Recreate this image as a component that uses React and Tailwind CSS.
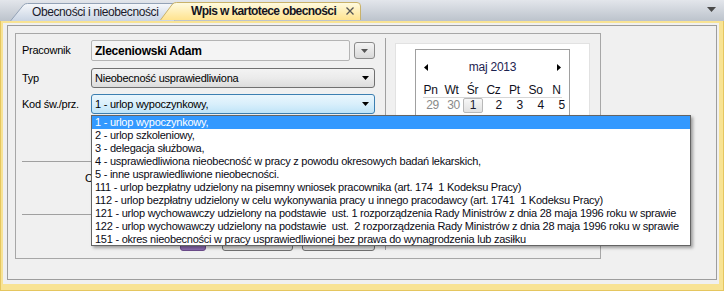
import React from "react";

const items = [
  "1 - urlop wypoczynkowy,",
  "2 - urlop szkoleniowy,",
  "3 - delegacja służbowa,",
  "4 - usprawiedliwiona nieobecność w pracy z powodu okresowych badań lekarskich,",
  "5 - inne usprawiedliwione nieobecności.",
  "111 - urlop bezpłatny udzielony na pisemny wniosek pracownika (art. 174  1 Kodeksu Pracy)",
  "112 - urlop bezpłatny udzielony w celu wykonywania pracy u innego pracodawcy (art. 1741  1 Kodeksu Pracy)",
  "121 - urlop wychowawczy udzielony na podstawie  ust. 1 rozporządzenia Rady Ministrów z dnia 28 maja 1996 roku w sprawie",
  "122 - urlop wychowawczy udzielony na podstawie  ust.  2 rozporządzenia Rady Ministrów z dnia 28 maja 1996 roku w sprawie",
  "151 - okres nieobecności w pracy usprawiedliwionej bez prawa do wynagrodzenia lub zasiłku",
];

function Down({ color = "#000" }) {
  return (
    <svg width="7" height="4" viewBox="0 0 7 4">
      <path d="M0 0 L7 0 L3.5 4 Z" fill={color} />
    </svg>
  );
}

function TabShape({ id, w, from, to, stroke, rightRound }) {
  const d = rightRound
    ? `M0.5 18 L12.5 2 Q14 0.5 16.5 0.5 L${w - 4} 0.5 Q${w - 0.5} 0.5 ${w - 0.5} 4 L${w - 0.5} 18`
    : `M0.5 18 L13.5 2 Q15 0.5 17.5 0.5 L${w} 0.5 L${w} 18`;
  return (
    <svg className="absolute inset-0" width={w} height="18" viewBox={`0 0 ${w} 18`}>
      <defs>
        <linearGradient id={id} x1="0" y1="0" x2="0" y2="1">
          <stop offset="0" stopColor={from} />
          <stop offset="1" stopColor={to} />
        </linearGradient>
      </defs>
      <path d={d + " Z"} fill={`url(#${id})`} />
      <path d={d} fill="none" stroke={stroke} strokeWidth="1" />
    </svg>
  );
}

export default function App() {
  const days = ["Pn", "Wt", "Śr", "Cz", "Pt", "So", "N"];
  const nums = ["29", "30", "1", "2", "3", "4", "5"];
  return (
    <div className="relative w-[724px] h-[291px] overflow-hidden bg-[#f0f0f0] font-['Liberation_Sans',Arial,sans-serif] text-[11px] tracking-[-0.25px] text-black">
      {/* tab bar */}
      <div className="h-[21px] flex items-end pl-[10px] bg-linear-to-b from-[#e3e6eb] to-[#bcc3cc]">
        <div className="relative w-[165px] h-[18px] shrink-0">
          <TabShape id="t1" w={165} from="#f6f8fb" to="#c9d4e3" stroke="#93a2b6" />
          <div className="relative pl-[22px] h-[18px] flex items-center text-[12px] tracking-[-0.4px] text-[#1b1b2b]">
            Obecności i nieobecności
          </div>
        </div>
        <div className="relative z-10 w-[201px] h-[19px] -ml-[15px] shrink-0">
          <TabShape id="t2" w={201} from="#fffbe2" to="#ffe38e" stroke="#c9b26a" rightRound />
          <div className="relative pl-[31px] pr-[7px] h-[18px] flex items-center text-[12px] tracking-[-0.6px] font-bold text-[#15151f]">
            <span>Wpis w kartotece obecności</span>
            <svg className="ml-auto" width="8" height="8" viewBox="0 0 8 8">
              <path d="M0.5 0.5 L7.5 7.5 M7.5 0.5 L0.5 7.5" stroke="#555" strokeWidth="1.3" />
            </svg>
          </div>
        </div>
        <div className="ml-auto mr-[8px] mb-[9px]">
          <svg width="9" height="5" viewBox="0 0 9 5">
            <path d="M0 0 L9 0 L4.5 5 Z" fill="#4a4a4a" />
          </svg>
        </div>
      </div>

      {/* body with yellow frame */}
      <div className="h-[270px] bg-[#f8e394] border-x border-b border-[#e5c65f] pt-[2px] pl-[2px] pr-[4px] pb-[6px]">
        <div className="h-full bg-[#f0f0f0] pt-[2px] pl-[4px] pr-[2px] pb-[4px]">
          <div className="h-[255px] border border-[#9d9d9d] bg-[#f0f0f0] pt-[7px] pl-[7px]">
            {/* group box */}
            <div className="w-[586px] h-[226px] border border-[#a7a7a7] flex">
              {/* left column */}
              <div className="w-[369px] pl-[6px] pt-[6px] shrink-0">
                <div className="flex items-center h-[21px]">
                  <div className="w-[69px]">Pracownik</div>
                  <div className="w-[259px] h-[21px] border border-[#b4b4b4] bg-[#f4f4f4] rounded-[2px] pl-[3px] flex items-center font-bold text-[12px]">
                    Zleceniowski Adam
                  </div>
                  <div className="ml-[4px] w-[21px] h-[17px] rounded-[3px] border border-[#8a8a8a] bg-linear-to-b from-[#f4f4f4] to-[#d9d9d9] flex items-center justify-center">
                    <Down color="#555" />
                  </div>
                </div>
                <div className="flex items-center h-[20px] mt-[7px]">
                  <div className="w-[69px]">Typ</div>
                  <div className="w-[284px] h-[20px] rounded-[3px] border border-[#707070] bg-linear-to-b from-[#f3f3f3] via-[#ebebeb] to-[#dcdcdc] pl-[3px] pr-[5px] flex items-center justify-between">
                    <span>Nieobecność usprawiedliwiona</span>
                    <Down />
                  </div>
                </div>
                <div className="flex items-center h-[20px] mt-[6px]">
                  <div className="w-[69px]">Kod św./prz.</div>
                  <div className="w-[284px] h-[20px] rounded-[3px] border border-[#3c7fb1] bg-linear-to-b from-[#eaf6fd] via-[#d9effb] to-[#bfe4f8] pl-[3px] pr-[5px] flex items-center justify-between">
                    <span>1 - urlop wypoczynkowy,</span>
                    <Down />
                  </div>
                </div>
                <div className="mt-[47px] h-px w-[353px] bg-[#a0a0a0]" />
                <div className="mt-[8px] pl-[63px] h-[14px]">Czas trwania</div>
                <div className="mt-[30px] h-px w-[353px] bg-[#a0a0a0]" />
                <div className="mt-[13px] flex items-end gap-[16px] pl-[158px]">
                  <div className="w-[26px] h-[23px] rounded-[3px] border border-[#6b4c8a] bg-[#8c6cb0]" />
                  <div className="w-[71px] h-[23px] rounded-[3px] border border-[#707070] bg-linear-to-b from-[#f3f3f3] to-[#dcdcdc]" />
                  <div className="w-[73px] h-[23px] -ml-[7px] rounded-[3px] border border-[#707070] bg-linear-to-b from-[#f3f3f3] to-[#dcdcdc]" />
                </div>
              </div>
              {/* separator */}
              <div className="w-px h-[212px] mt-[4px] bg-[#a0a0a0] shrink-0" />
              {/* calendar area */}
              <div className="ml-[9px] mt-[9px] w-[195px] h-[150px] bg-white border border-[#e2e2e2] pl-[19px] pt-[5px] shrink-0">
                <div className="w-[155px] h-[130px] border border-[#a0a0a0] text-[12px]">
                  <div className="mt-[10px] h-[14px] flex items-center justify-between px-[8px]">
                    <svg width="4" height="7" viewBox="0 0 4 7"><path d="M4 0 L0 3.5 L4 7 Z" fill="#000" /></svg>
                    <span className="text-[#1c2350]">maj 2013</span>
                    <svg width="4" height="7" viewBox="0 0 4 7"><path d="M0 0 L4 3.5 L0 7 Z" fill="#000" /></svg>
                  </div>
                  <div className="mt-[10px] px-[4px] grid grid-cols-[repeat(7,21px)] h-[12px] items-center">
                    {days.map((d) => (
                      <div key={d} className="text-center leading-[12px] text-[#101020]">{d}</div>
                    ))}
                  </div>
                  <div className="mx-[7px] mt-[1px] h-px bg-[#d6d6d6]" />
                  <div className="px-[4px] grid grid-cols-[repeat(7,21px)] h-[15px] items-center">
                    {nums.map((n, i) => (
                      <div key={n} className="flex justify-end pr-[1px]">
                        {i === 2 ? (
                          <div className="w-[20px] h-[15px] -mr-[1px] rounded-[2px] border border-[#b8b8b8] bg-linear-to-b from-[#f7f7f7] to-[#e1e1e1] flex items-center justify-center leading-[13px] text-[#1c1c30]">
                            {n}
                          </div>
                        ) : (
                          <span className={`leading-[15px] pr-[1px] ${i < 2 ? "text-[#8a8a8a]" : "text-[#101020]"}`}>{n}</span>
                        )}
                      </div>
                    ))}
                  </div>
                </div>
              </div>
            </div>
          </div>
        </div>
      </div>

      {/* dropdown list */}
      <div className="absolute left-[91px] top-[115px] w-[600px] h-[131px] border border-[#646464] bg-white shadow-[2px_2px_3px_rgba(0,0,0,0.35)] overflow-hidden">
        {items.map((t, i) => (
          <div
            key={i}
            className={`h-[13px] leading-[13px] pl-[3px] whitespace-pre overflow-hidden ${i === 0 ? "bg-[#3399ff] text-white" : "text-[#0a0a14]"}`}
          >
            {t}
          </div>
        ))}
      </div>
    </div>
  );
}
